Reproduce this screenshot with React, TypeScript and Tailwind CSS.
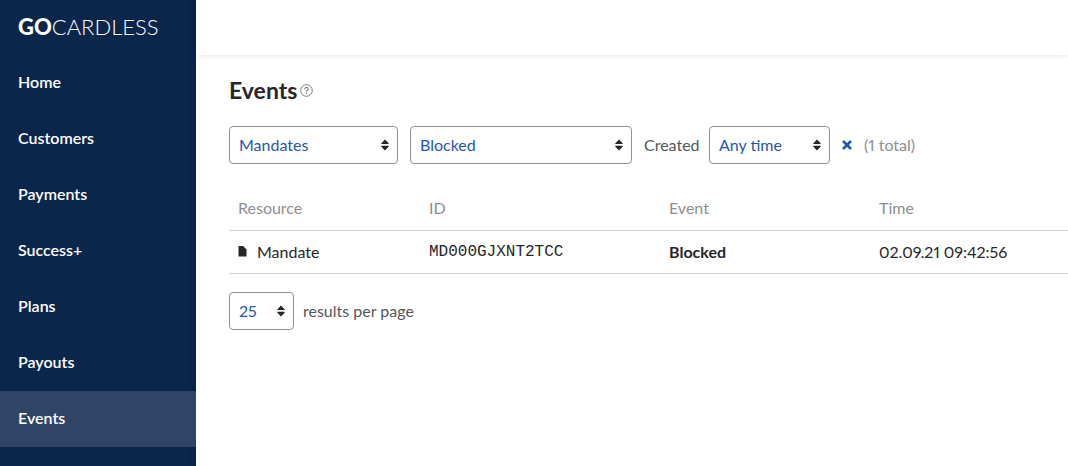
import React, { useState, ChangeEvent } from "react";

type SelectProps = {
  label: string;
  options: string[];
  value: string;
  onChange: (value: string) => void;
  className: string;
};

const navItems = ["Home", "Customers", "Payments", "Success+", "Plans", "Payouts", "Events"];

const events = [
  { resource: "Mandate", id: "MD000GJXNT2TCC", event: "Blocked", time: "02.09.21 09:42:56" },
];

const defaultFilters = {
  resource: "Mandates",
  event: "Blocked",
  created: "Any time",
};

const Select = ({ label, options, value, onChange, className }: SelectProps) => {
  return (
    <div className={`relative h-[38px] shrink-0 ${className}`}>
      <select
        aria-label={label}
        value={value}
        onChange={(e: ChangeEvent<HTMLSelectElement>) => onChange(e.target.value)}
        className="h-full w-full appearance-none rounded border border-[#8e8e93] bg-white pl-[9px] pr-6 proportional-nums text-[#1f56b3]">
        {options.map((option) => (
          <option key={option}>{option}</option>
        ))}
      </select>
      <svg
        viewBox="0 0 8 12"
        className="pointer-events-none absolute right-[9px] top-[13px] h-3 w-2 fill-[#262729]">
        <path d="M4 .4 7.8 4.4Q8 5 7.4 5H.6Q0 5 .2 4.4ZM4 11.4 7.8 7.4Q8 6.8 7.4 6.8H.6Q0 6.8.2 7.4Z" />
      </svg>
    </div>
  );
};

const Sidebar = () => {
  return (
    <aside className="w-[196px] shrink-0 bg-[#0a264b] text-white shadow-[inset_-8px_0_8px_-8px_rgba(0,0,0,0.2)]">
      <a href="#" className="flex h-[55px] items-center pb-[2px] pl-[18px] text-[22px]">
        <span className="font-black">GO</span>
        <span className="font-light">CARDLESS</span>
      </a>
      <nav>
        {navItems.map((item) => (
          <a
            key={item}
            href="#"
            className={`flex h-14 items-center pb-[2px] pl-[18px] font-semibold ${
              item === "Events" ? "bg-[#304466]" : ""
            }`}>
            {item}
          </a>
        ))}
      </nav>
    </aside>
  );
};

const HelpIcon = () => (
  <svg viewBox="0 0 13 13" fill="none" stroke="#7d7e82" className="h-[13px] w-[13px]">
    <circle cx="6.5" cy="6.5" r="5.8" />
    <path d="M4.7 5.2C4.7 4 5.5 3.4 6.5 3.4S8.3 4 8.3 5C8.3 6.2 6.5 6.3 6.5 7.7" strokeWidth="1.1" />
    <path d="M6.5 8.7V9.9" strokeWidth="1.2" />
  </svg>
);

const App = () => {
  const [filters, setFilters] = useState(defaultFilters);
  const [perPage, setPerPage] = useState("25");

  return (
    <div className="flex min-h-screen bg-white font-['Lato',sans-serif] text-[16px] leading-5 text-[#262729]">
      <Sidebar />
      <div className="min-w-0 flex-1">
        <header className="h-[55px] shadow-[0_1px_5px_rgba(0,0,0,0.1)]" />
        <main className="pl-[33px] pt-[21px]">
          <div className="flex items-center gap-[3px]">
            <h1 className="text-[23px] font-bold leading-7">Events</h1>
            <button aria-label="About events">
              <HelpIcon />
            </button>
          </div>

          <div className="mt-[22px] flex items-center">
            <Select
              label="Resource type"
              options={["Mandates", "Payments", "Payouts"]}
              value={filters.resource}
              onChange={(resource) => setFilters({ ...filters, resource })}
              className="w-[169px]"
            />
            <Select
              label="Event type"
              options={["Blocked", "Created", "Cancelled"]}
              value={filters.event}
              onChange={(event) => setFilters({ ...filters, event })}
              className="ml-3 w-[222px]"
            />
            <span className="ml-3 w-[65px] text-[#55565a]">Created</span>
            <Select
              label="Created"
              options={["Any time", "Today", "Last 7 days"]}
              value={filters.created}
              onChange={(created) => setFilters({ ...filters, created })}
              className="w-[121px]"
            />
            <button
              aria-label="Clear filters"
              className="ml-3"
              onClick={() => setFilters(defaultFilters)}>
              <svg viewBox="0 0 10 10" className="h-[10px] w-[10px]" stroke="#1f56b3" strokeWidth="2.6">
                <path d="M1 1 9 9M9 1 1 9" />
              </svg>
            </button>
            <span className="ml-3 proportional-nums text-[#8e8e93]">(1 total)</span>
          </div>

          <table className="mt-[23px] w-full table-fixed text-left">
            <thead>
              <tr className="h-[43px] border-b border-[#d3d3d6] text-[#8e8e93]">
                <th className="w-[191px] pl-[9px] font-normal">Resource</th>
                <th className="w-[240px] pl-[9px] font-normal">ID</th>
                <th className="w-[210px] pl-[9px] font-normal">Event</th>
                <th className="pl-[9px] font-normal">Time</th>
              </tr>
            </thead>
            <tbody>
              {events.map((row) => (
                <tr key={row.id} className="h-[43px] border-b border-[#d3d3d6]">
                  <td className="pl-[9px]">
                    <div className="flex items-center gap-[10px]">
                      <svg viewBox="0 0 9 11" className="h-[11px] w-[9px] fill-[#262729]">
                        <path d="M.5 0H5.2L8.5 3.5V10.5H.5Z" />
                      </svg>
                      {row.resource}
                    </div>
                  </td>
                  <td className="pl-[9px] font-['Liberation_Mono',monospace]">{row.id}</td>
                  <td className="pl-[9px] font-bold">{row.event}</td>
                  <td className="pl-[9px] proportional-nums">{row.time}</td>
                </tr>
              ))}
            </tbody>
          </table>

          <div className="mt-[18px] flex items-center gap-[9px]">
            <Select
              label="Results per page"
              options={["25", "50", "100"]}
              value={perPage}
              onChange={setPerPage}
              className="w-[65px]"
            />
            <span className="text-[#55565a]">results per page</span>
          </div>
        </main>
      </div>
    </div>
  );
};

export default App;
